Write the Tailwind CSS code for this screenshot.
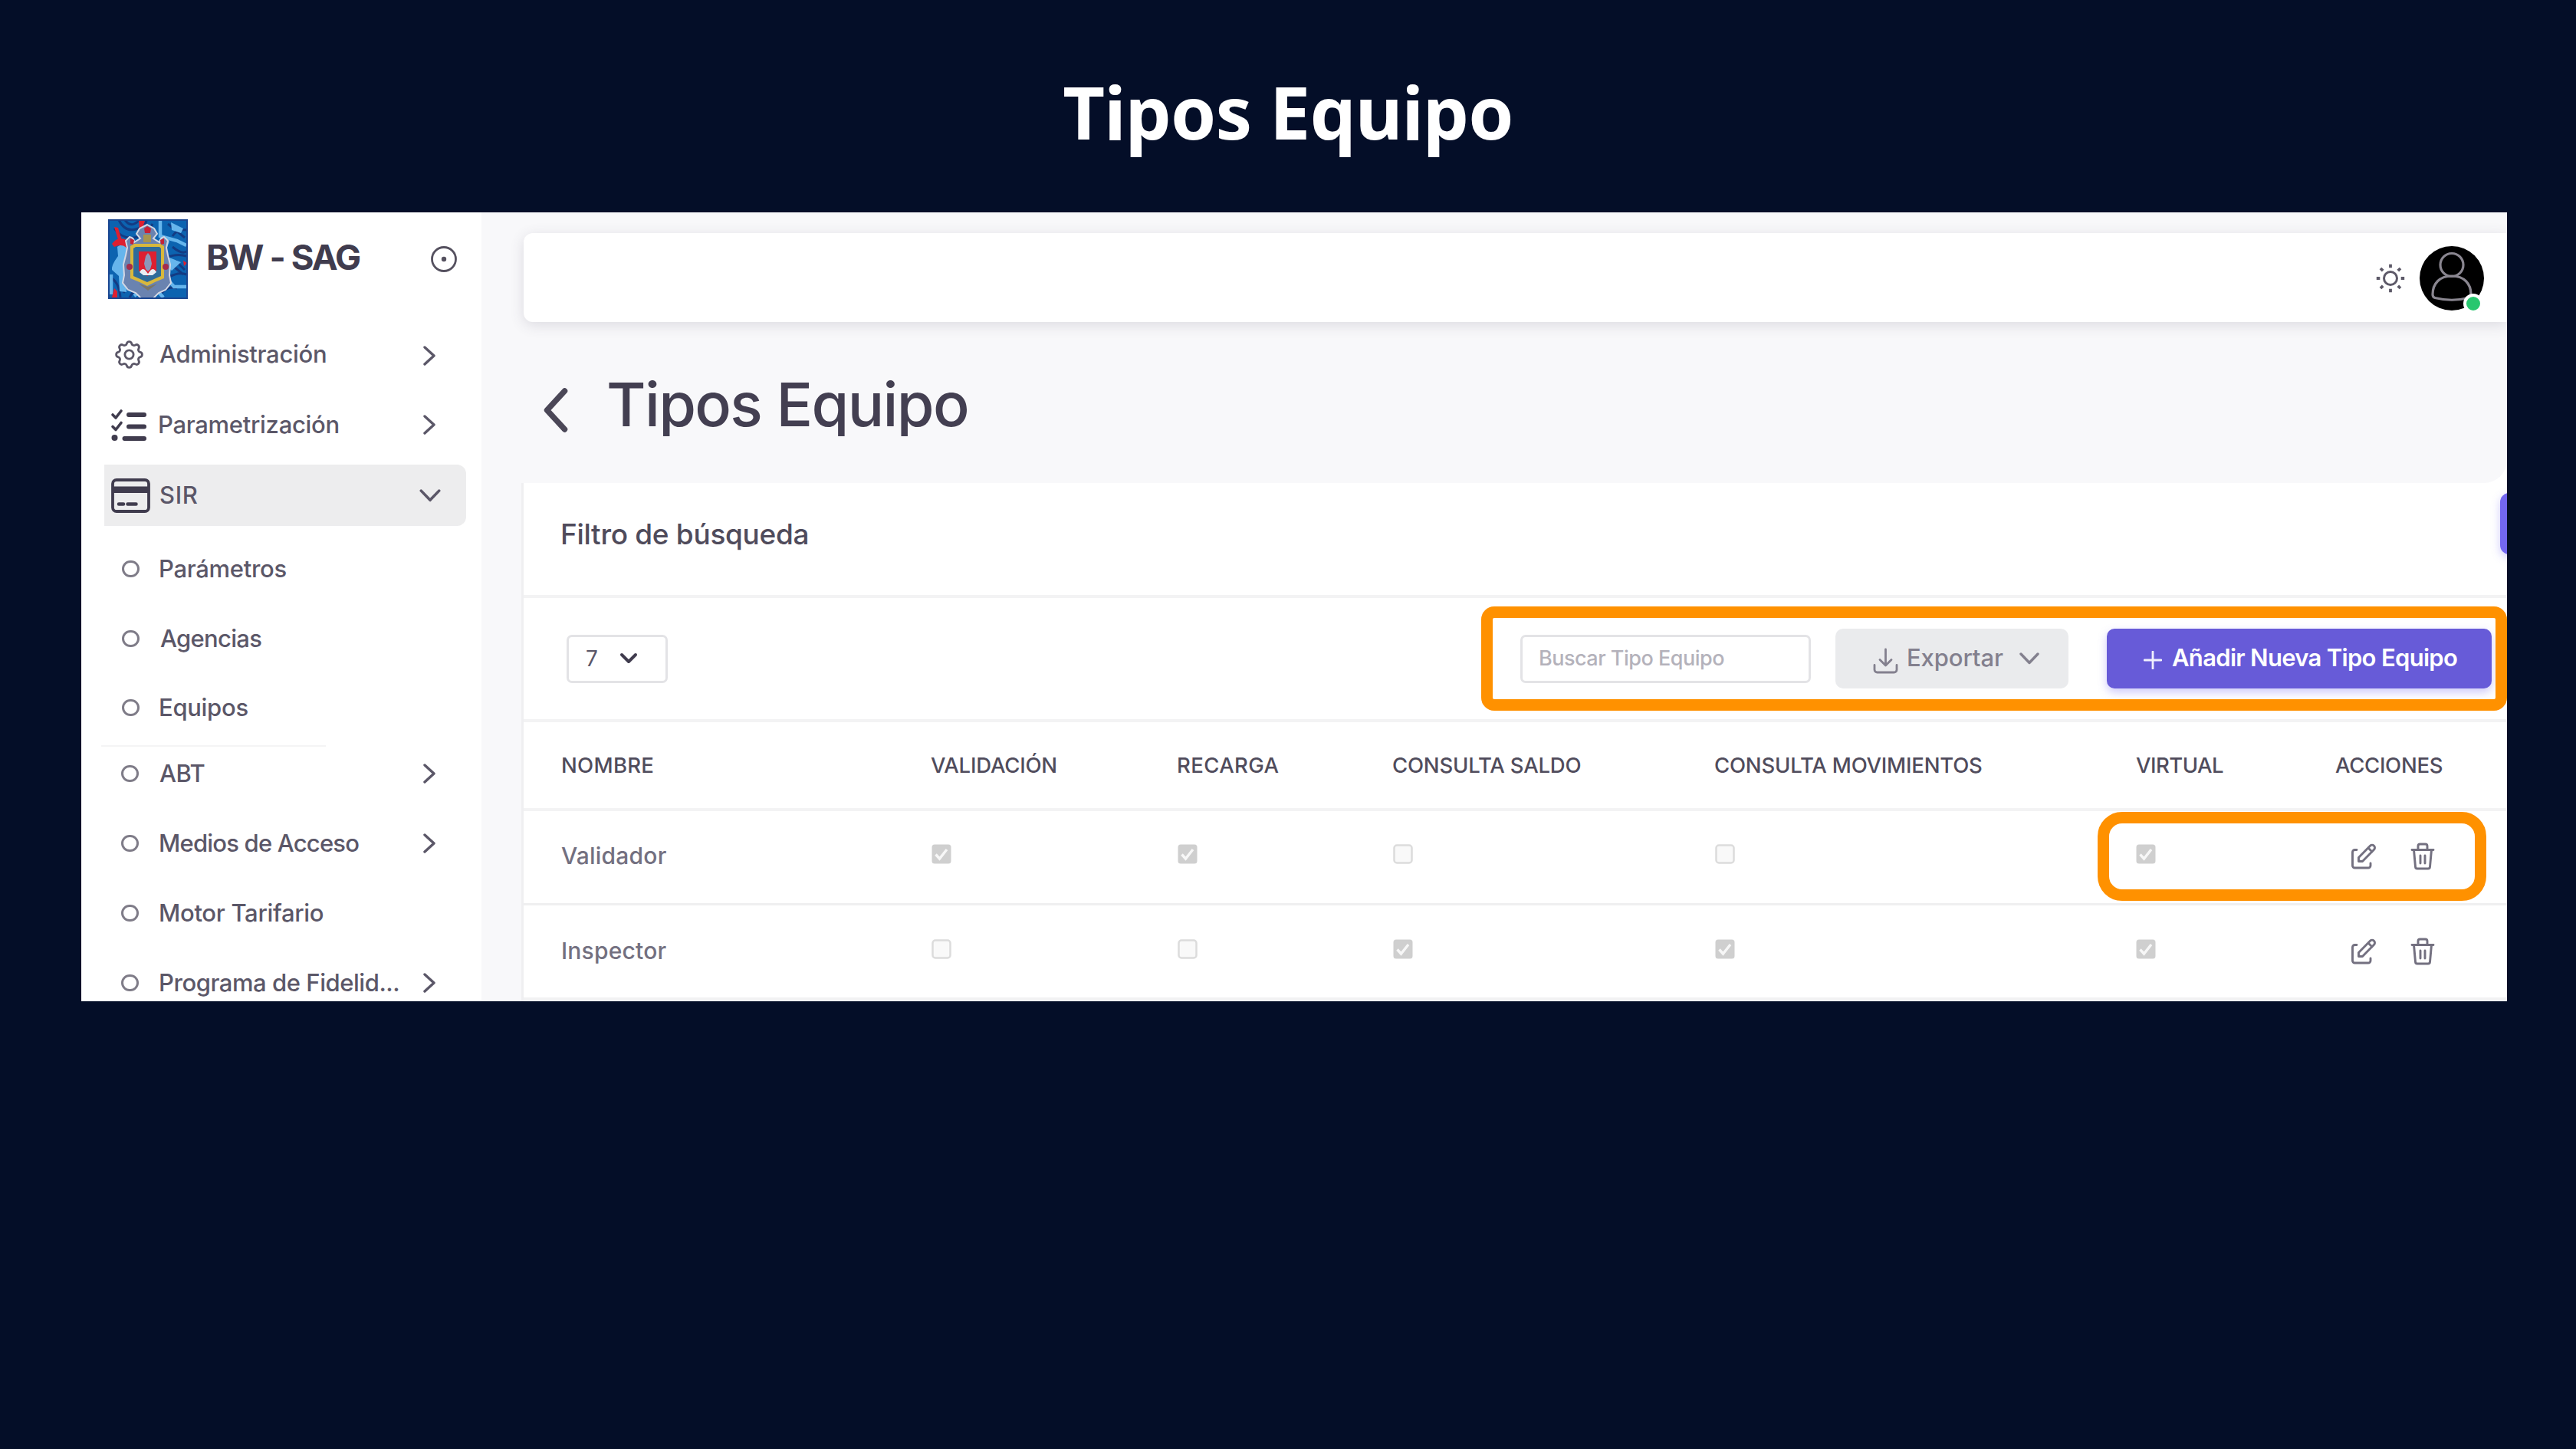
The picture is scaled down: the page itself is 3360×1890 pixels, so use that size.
<!DOCTYPE html>
<html lang="es">
<head>
<meta charset="utf-8">
<title>Tipos Equipo</title>
<script src="https://cdn.jsdelivr.net/npm/@tailwindcss/browser@4"></script>
</head>
<body class="w-[3360px] h-[1890px] overflow-hidden bg-[#040e28] font-['Inter',sans-serif] text-[#5b5768]">

<!-- Shared icons -->
<svg class="hidden">
  <symbol id="right" viewBox="0 0 16 26"><path d="M2 2l12 11L2 24" fill="none" stroke="currentColor" stroke-width="3.400" stroke-linecap="round" stroke-linejoin="round"/></symbol>
  <symbol id="down" viewBox="0 0 26 16"><path d="M2 2l11 11.500L24 2" fill="none" stroke="currentColor" stroke-width="3.400" stroke-linecap="round" stroke-linejoin="round"/></symbol>
  <symbol id="on" viewBox="0 0 26 26"><rect x=".5" y=".5" width="25" height="25" rx="3.500" fill="#cfcfcf"/><path d="M5.500 13.500l5 5.500L20 7" fill="none" stroke="#f7f7f7" stroke-width="3.400"/></symbol>
  <symbol id="off" viewBox="0 0 26 26"><rect x="1.500" y="1.500" width="23" height="23" rx="3.500" fill="#f9f9f9" stroke="#dcdcdc" stroke-width="2.500"/></symbol>
  <symbol id="edit" viewBox="0 0 34 34"><g fill="none" stroke="currentColor" stroke-width="2.900" stroke-linejoin="round" stroke-linecap="round"><path d="M8 8.500H5.500a3 3 0 0 0-3 3V29a3 3 0 0 0 3 3H23a3 3 0 0 0 3-3v-3"/><path d="M10.500 23.500v-5L25.500 3.200a3.500 3.500 0 0 1 5 5L15.500 23.500zM23 6l5 5"/></g></symbol>
  <symbol id="trash" viewBox="0 0 32 36"><g fill="none" stroke="currentColor" stroke-width="2.900" stroke-linejoin="round" stroke-linecap="round"><path d="M2 9.500h28M4.500 9.500l2 22a2.500 2.500 0 0 0 2.500 2.500h14a2.500 2.500 0 0 0 2.500-2.500l2-22M10 9V4.500A2.500 2.500 0 0 1 12.500 2h7A2.500 2.500 0 0 1 22 4.500V9M13 17v10M19 17v10"/></g></symbol>
</svg>

<header class="h-[277px] flex justify-center pt-[95px]">
  <h1 class="h-[100px] leading-[100px] text-[95px] tracking-[-0.85px] font-bold text-white font-['Noto_Sans',sans-serif]">Tipos Equipo</h1>
</header>

<div class="relative ml-[106px] w-[3164px] h-[1029px] overflow-hidden bg-white flex">

  <!-- Sidebar -->
  <nav class="w-[522px] h-full shrink-0 flex flex-col overflow-hidden text-[31px] tracking-[-0.3px] font-[450]">
    <div class="h-[140px] shrink-0 flex items-start pl-[35px] pt-[9px]">
      <svg class="w-[104px] h-[104px] shrink-0" viewBox="0 0 104 104">
        <rect width="104" height="104" fill="#0c63b0"/>
        <g fill="none" stroke="#133b83" stroke-width="3"><path d="M14 1q8 16 22 12T50 1M22 1q6 8 12 5T40 1M8 12q10 14 26 12T58 6M76 50q14-6 26-2M78 76q14-8 24-4M2 76q12 4 14 26M20 96q8-14 24-16M28 102q6-12 20-14M68 98q10-12 22-8M84 22q6-10 18-8M78 6l22 18M88 54l12 12M86 62l12 10M84 36q12 10 18 6"/></g>
        <path d="M12 36q8-6 13 3 1 9-3 16l3 12-1 28-9-1-1-20-9-8q-1-6 8-18z" fill="#66b5ec"/>
        <g fill="none" stroke="#66b5ec" stroke-width="4.500"><path d="M68 0v22l22 6 12 6M78 28l-8 20M74 74l12 14h18M4 72v26M56 84l16 18M34 100l12-10"/></g>
        <path d="M82 4l16 8-3 6-12-4zM80 50l15 6-12 11-5-5z" fill="#66b5ec"/>
        <path d="M40 0l8 2-4 12 4 8-7-4zM8 10l5 1 6 20-5-1zM5 32q8-11 19-5 9 8 3 16-4-13-19-7zM5 102l3-12 4 4v8zM98 54l5 3-4 4z" fill="#dd2031"/>
        <path d="M51 7l9 5 4 7-5 6 8 5q1-6 6-7l5 5-2 9 2 10 3 12-1 14 2 10-7 9-9 4-11 11-4 6-5-7-10-10-10-4-7-9 2-10-1-14 3-12 2-10-2-9 5-5q6 1 6 7l8-5-5-6 4-7z" fill="#6a83b0" stroke="#d4d8e4" stroke-width="2"/>
        <path d="M47 12l4-3 5 3-1 6h-7zM29 25l5 2-1 6-4-1zM73 25l-5 2 1 6 4-1z" fill="#c52237"/>
        <path d="M46 20h10v10h-10z" fill="#a79550"/>
        <path d="M34 32h34l5 3v42l-12 5-10 5-10-5-12-5V35z" fill="#d8b83c"/>
        <path d="M36 36h31l2 2v36l-18 8-18-8V38z" fill="#2f6b9a"/>
        <path d="M40 42h23v25l-12 7-11-7z" fill="#dd2031"/>
        <path d="M49 48l3-4 3 4 2 10-2 7-3 3-3-3-2-7z" fill="#8c97b8"/>
        <path d="M41 69q4-7 8-2l3 4 3-4q4-5 8 2l-5 4H46z" fill="#e9edf3"/>
        <circle cx="28" cy="62" r="4" fill="#a62b4c"/><circle cx="75" cy="62" r="4" fill="#a62b4c"/>
        <path d="M40 84l12 4 12-4-12 9z" fill="#7b7668"/>
        <rect x="1" y="1" width="102" height="102" fill="none" stroke="#1b4690" stroke-width="2"/>
      </svg>
      <span class="ml-[24px] mt-[20px] h-[60px] leading-[60px] w-[292px] text-[45.500px] tracking-[-1.900px] font-bold text-[#403c4e]">BW - SAG</span>
      <svg class="w-[36px] h-[36px] mt-[34px]" viewBox="0 0 36 36"><circle cx="18" cy="18" r="15.500" fill="none" stroke="#55515f" stroke-width="2.800"/><circle cx="18" cy="18" r="3.200" fill="#55515f"/></svg>
    </div>

    <a class="h-[91px] shrink-0 flex items-center pl-[40px]">
      <svg class="w-[45px] h-[45px]" viewBox="0 0 24 24" fill="none" stroke="currentColor" stroke-width="1.500" stroke-linejoin="round"><path d="M10.325 4.317c.426 -1.756 2.924 -1.756 3.350 0a1.724 1.724 0 0 0 2.573 1.066c1.543 -.94 3.310 .826 2.370 2.370a1.724 1.724 0 0 0 1.065 2.572c1.756 .426 1.756 2.924 0 3.350a1.724 1.724 0 0 0 -1.066 2.573c.94 1.543 -.826 3.310 -2.370 2.370a1.724 1.724 0 0 0 -2.572 1.065c-.426 1.756 -2.924 1.756 -3.350 0a1.724 1.724 0 0 0 -2.573 -1.066c-1.543 .94 -3.310 -.826 -2.370 -2.370a1.724 1.724 0 0 0 -1.065 -2.572c-1.756 -.426 -1.756 -2.924 0 -3.350a1.724 1.724 0 0 0 1.066 -2.573c-.94 -1.543 .826 -3.310 2.370 -2.370c1 .608 2.296 .07 2.572 -1.065z"/><circle cx="12" cy="12" r="3"/></svg>
      <span class="ml-[17px] w-[344px]">Administración</span><svg class="w-[16px] h-[26px] mt-[2px]"><use href="#right"/></svg>
    </a>
    <a class="h-[92px] shrink-0 flex items-center pl-[38px]">
      <svg class="w-[48px] h-[42px]" viewBox="0 0 48 42"><g fill="none" stroke="#403c4e" stroke-linecap="round"><path d="M24 8h20M24 23.500h20M18.500 39h25.500" stroke-width="6"/><path d="M3 8l4 4 7-9M3 23.500l4 4 7-9" stroke-width="3.600" stroke-linejoin="round"/></g><circle cx="5.500" cy="38" r="4" fill="#403c4e"/></svg>
      <span class="ml-[14px] w-[346px]">Parametrización</span><svg class="w-[16px] h-[26px]"><use href="#right"/></svg>
    </a>
    <a class="mt-[6px] ml-[30px] w-[472px] h-[80px] shrink-0 rounded-r-[12px] bg-[#ededee] flex items-center pl-[9px]">
      <svg class="w-[52px] h-[47px]" viewBox="0 0 52 47"><rect x="2" y="3" width="47" height="41" rx="5" fill="none" stroke="#403c4e" stroke-width="3.800"/><path d="M2 11.500h47v8.500H2z" fill="#403c4e"/><path d="M10 34.500h6M21.500 34.500h11" stroke="#403c4e" stroke-width="4.500" stroke-linecap="round"/></svg>
      <span class="ml-[11px] w-[339px] tracking-[0.6px]">SIR</span><svg class="w-[28px] h-[17px]"><use href="#down"/></svg>
    </a>
    <a class="mt-[11px] h-[90px] shrink-0 flex items-center pl-[53px]"><i class="w-[23px] h-[22px] border-[3px] border-[#7f7c88] rounded-full"></i><span class="ml-[25px]">Parámetros</span></a>
    <a class="h-[91px] shrink-0 flex items-center pl-[53px]"><i class="w-[23px] h-[22px] border-[3px] border-[#7f7c88] rounded-full"></i><span class="ml-[27px] mt-px tracking-[-0.7px]">Agencias</span></a>
    <a class="h-[90px] shrink-0 flex items-center pl-[53px]"><i class="w-[23px] h-[22px] border-[3px] border-[#7f7c88] rounded-full"></i><span class="ml-[25px]">Equipos</span></a>
    <div class="mt-[4px] ml-[26px] w-[293px] h-[2px] shrink-0 bg-[#f4f4f5]"></div>
    <a class="h-[70px] shrink-0 flex items-center pl-[52px]"><i class="w-[23px] h-[22px] border-[3px] border-[#7f7c88] rounded-full"></i><span class="ml-[27px] w-[344px] tracking-[-0.5px]">ABT</span><svg class="w-[16px] h-[26px]"><use href="#right"/></svg></a>
    <a class="mt-[11px] h-[90px] shrink-0 flex items-center pl-[52px]"><i class="w-[23px] h-[22px] border-[3px] border-[#7f7c88] rounded-full"></i><span class="ml-[26px] w-[345px] tracking-[-0.8px]">Medios de Acceso</span><svg class="w-[16px] h-[26px]"><use href="#right"/></svg></a>
    <a class="mt-px h-[90px] shrink-0 flex items-center pl-[52px]"><i class="w-[23px] h-[22px] border-[3px] border-[#7f7c88] rounded-full"></i><span class="ml-[26px]">Motor Tarifario</span></a>
    <a class="mt-px h-[90px] shrink-0 flex items-center pl-[52px]"><i class="w-[23px] h-[22px] border-[3px] border-[#7f7c88] rounded-full"></i><span class="ml-[26px] w-[345px] tracking-[-0.45px]">Programa de Fidelid...</span><svg class="w-[16px] h-[26px]"><use href="#right"/></svg></a>
  </nav>

  <!-- Content -->
  <main class="w-[2642px] h-full shrink-0 flex flex-col bg-[#f8f8fa] pl-[52px] overflow-hidden">
    <div class="h-[353px] shrink-0 bg-white">
    <div class="h-full bg-[#f8f8fa] rounded-br-[30px] pt-[27px]">
      <div class="ml-[3px] h-[116px] rounded-l-[12px] bg-white shadow-[0_4px_18px_rgba(75,70,92,0.16)] flex items-center justify-end pr-[30px]">
        <svg class="w-[38px] h-[38px] mt-[2px]" viewBox="0 0 38 38"><g fill="none" stroke="#5d5968"><circle cx="19" cy="19" r="8.500" stroke-width="3"/><path d="M19 .8v4.500M19 32.700v4.500M.8 19h4.500M32.700 19h4.500M6 6l3.200 3.200M28.800 28.800L32 32M6 32l3.200-3.200M28.800 9.200L32 6" stroke-width="3.800"/></g></svg>
        <div class="relative ml-[19px] mt-[2px] w-[84px] h-[84px]">
          <svg class="w-[84px] h-[84px]" viewBox="0 0 84 84"><circle cx="42" cy="42" r="42" fill="#000"/><g fill="none" stroke="#8a8690" stroke-width="3.200"><circle cx="42" cy="24.500" r="15"/><path d="M17 63c0-14 9-24 25-24s25 10 25 24c0 2-1 4-3 4.500-14 3.500-30 3.500-44 0-2-.5-3-2.500-3-4.500z"/></g></svg>
          <span class="absolute left-[57px] top-[62px] w-[26px] h-[26px] rounded-full border-4 border-white bg-[#28c76f]"></span>
        </div>
      </div>
      <div class="mt-[57px] ml-[27px] h-[104px] flex items-center">
        <svg class="w-[36px] h-[60px] mt-[10px]" viewBox="0 0 36 60"><path d="M29.500 6L6.500 31l23 25" fill="none" stroke="#4b4757" stroke-width="7.500" stroke-linecap="round" stroke-linejoin="round"/></svg>
        <h2 class="ml-[48px] h-[94px] mb-[10px] overflow-hidden leading-[104px] -mt-[4px] text-[79px] tracking-[-1.67px] font-medium text-[#433f51]">Tipos Equipo</h2>
      </div>
    </div>
    </div>

    <section class="flex-1 flex flex-col bg-white border-l-[3px] border-[#efeff1]">
      <div class="relative h-[146px] shrink-0 pl-[48px] pt-[41px]">
        <h3 class="h-[52px] leading-[52px] text-[37px] tracking-[-0.3px] font-medium text-[#4f4b5b]">Filtro de búsqueda</h3>
        <span class="absolute left-[2578px] top-[13px] w-[60px] h-[80px] rounded-[12px] bg-[#7367f0] shadow-[0_4px_12px_rgba(115,103,240,0.35)]"></span>
      </div>
      <div class="h-[166px] shrink-0 border-t-4 border-b-4 border-[#f3f3f4] flex items-center pl-[56px]">
        <div class="w-[132px] h-[63px] rounded-[7px] border-[3px] border-[#e3e3e6] flex items-center pl-[22px]"><span class="text-[28px] w-[44px]">7</span>
          <svg class="w-[24px] h-[16px]" viewBox="0 0 24 16"><path d="M3 3l9 9 9-9" fill="none" stroke="#403c4e" stroke-width="4" stroke-linecap="round" stroke-linejoin="round"/></svg></div>
        <div class="ml-[1112px] w-[379px] h-[63px] rounded-[7px] border-[3px] border-[#e3e3e6] flex items-center pl-[21px] text-[27px] tracking-[-0.5px] font-[450] text-[#b4b2bb]">Buscar Tipo Equipo</div>
        <div class="ml-[32px] w-[304px] h-[78px] rounded-[10px] bg-[#eaebed] flex items-center pl-[49px] text-[#83808e]">
          <svg class="w-[33px] h-[34px] mt-[6px]" viewBox="0 0 33 34"><path d="M2 22.500v6a3.500 3.500 0 0 0 3.500 3.500h22a3.500 3.500 0 0 0 3.500-3.500v-6M16.500 2v21M9 15.500l7.500 7.500 7.500-7.500" fill="none" stroke="currentColor" stroke-width="2.800" stroke-linecap="round" stroke-linejoin="round"/></svg>
          <span class="ml-[11px] w-[147px] text-[31px] tracking-[-0.1px] font-medium -mt-[2px]">Exportar</span><svg class="w-[26px] h-[16px]"><use href="#down"/></svg></div>
        <div class="ml-[50px] w-[502px] h-[78px] rounded-[10px] bg-[#675bd8] shadow-[0_5px_12px_rgba(115,103,240,0.35)] flex items-center pl-[48px] text-white">
          <svg class="w-[24px] h-[24px] mt-[4px]" viewBox="0 0 24 24"><path d="M12 1v22M1 12h22" stroke="#f0effd" stroke-width="2.800" stroke-linecap="round"/></svg>
          <span class="ml-[13px] text-[31px] tracking-[-0.69px] font-semibold -mt-[2px] whitespace-nowrap">Añadir Nueva Tipo Equipo</span></div>
      </div>

      <div class="h-[116px] shrink-0 border-b-4 border-[#f3f3f4] grid grid-cols-[482px_321px_281px_420px_549px_260px_1fr] items-center pl-[50px] pt-px text-[27.500px] font-medium whitespace-nowrap text-[#504c5c]">
        <span class="-ml-px tracking-[0.3px]">NOMBRE</span><span class="-ml-px tracking-[-0.2px]">VALIDACIÓN</span><span class="-ml-px tracking-[0.4px]">RECARGA</span><span class="-ml-[1px] tracking-[-0.2px]">CONSULTA SALDO</span><span class="-ml-[1px] tracking-[-0.2px]">CONSULTA MOVIMIENTOS</span><span class="tracking-[-0.5px]">VIRTUAL</span><span class="tracking-[-0.3px]">ACCIONES</span>
      </div>
      <div class="h-[123px] shrink-0 border-b-[3px] border-[#efeff0] grid grid-cols-[482px_321px_281px_420px_549px_280px_78px_1fr] items-center pl-[50px] text-[30px] tracking-[0.2px] text-[#737080]">
        <span class="-ml-px -mt-[3px] font-[450]">Validador</span>
        <svg class="w-[26px] h-[26px] -mt-[9px]"><use href="#on"/></svg><svg class="w-[26px] h-[26px] -mt-[9px]"><use href="#on"/></svg><svg class="w-[26px] h-[26px] -mt-[9px]"><use href="#off"/></svg><svg class="w-[26px] h-[26px] -mt-[9px]"><use href="#off"/></svg><svg class="w-[26px] h-[26px] -mt-[9px]"><use href="#on"/></svg>
        <svg class="w-[34px] h-[34px] -mt-[2px]"><use href="#edit"/></svg><svg class="w-[32px] h-[36px] -mt-[2px]"><use href="#trash"/></svg>
      </div>
      <div class="h-[124px] shrink-0 border-b-[4px] border-[#f2f2f3] grid grid-cols-[482px_321px_281px_420px_549px_280px_78px_1fr] items-center pl-[50px] text-[30px] tracking-[0.2px] text-[#737080]">
        <span class="-ml-px -mt-px font-[450]">Inspector</span>
        <svg class="w-[26px] h-[26px] -mt-[7px]"><use href="#off"/></svg><svg class="w-[26px] h-[26px] -mt-[7px]"><use href="#off"/></svg><svg class="w-[26px] h-[26px] -mt-[7px]"><use href="#on"/></svg><svg class="w-[26px] h-[26px] -mt-[7px]"><use href="#on"/></svg><svg class="w-[26px] h-[26px] -mt-[7px]"><use href="#on"/></svg>
        <svg class="w-[34px] h-[34px]"><use href="#edit"/></svg><svg class="w-[32px] h-[36px]"><use href="#trash"/></svg>
      </div>
    </section>
  </main>

  <!-- Highlight callouts -->
  <div class="absolute left-[1826px] top-[514px] w-[1338px] h-[136px] rounded-[17px] border-[15.500px] border-[#ff9100]"></div>
  <div class="absolute left-[2630px] top-[782px] w-[507px] h-[116px] rounded-[32px] border-[15.500px] border-[#ff9100]"></div>
</div>
</body>
</html>
